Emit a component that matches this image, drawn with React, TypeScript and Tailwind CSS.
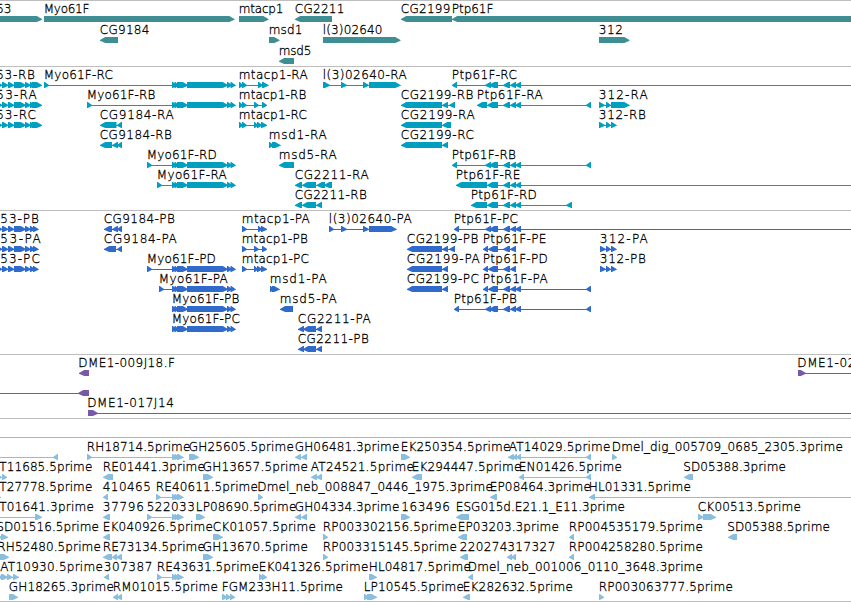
type Span = [number, number];
type Dir = "r" | "l";
interface Feature {
  dir: Dir;
  exons: Span[];
  label?: string;
  // left and right edge of the label
  at?: Span;
  // intron line, where it runs past the outer exons
  line?: Span;
}
type Lane = Feature[];

const f = (dir: Dir, exons: Span[], label?: string, at?: Span, line?: Span): Feature => ({
  dir,
  exons,
  label,
  at,
  line,
});

const EDGE = 860;

const P53: Span[] = [[-4, 2.5], [2, 8.5], [8, 14.5], [14, 26], [25, 31], [30, 35], [32, 42]];
const P53P: Span[] = [[-4, 2.5], [2, 8.5], [8, 14.5], [14, 26], [25, 31], [30, 35], [33, 38.5]];
const MYO: Span[] = [[172, 177], [174.5, 179], [177, 188], [187, 228], [227, 232], [230.5, 235.5]];
const PTP_A: Span[] = [[485, 491], [489, 498]];
const PTP_B: Span[] = [[503, 510], [510, 516], [515, 521]];
const TRIO: Span[] = [[172, 177], [174.5, 179.5], [177, 183.5]];

const genes: Lane[] = [
  [
    f("r", [[-10, 42]], "53", [-4, 11]),
    f("r", [[44, 234.5]], "Myo61F", [43.5, 89]),
    f("r", [[239, 268.5]], "mtacp1", [238.5, 283]),
    f("l", [[295, 332]], "CG2211", [294.5, 344]),
    f("l", [[401, 452]], "CG2199", [400.5, 450]),
    f("l", [[452, EDGE]], "Ptp61F", [451.5, 493]),
  ],
  [
    f("l", [[100, 118]], "CG9184", [99.5, 149]),
    f("r", [[269, 279.5]], "msd1", [268.5, 302]),
    f("r", [[323, 400.5]], "l(3)02640", [322.5, 382]),
    f("r", [[599, 629.5]], "312", [598.5, 622.5]),
  ],
  [f("l", [[279, 294]], "msd5", [278.5, 311])],
];

const transcripts: Lane[] = [
  [
    f("r", P53, "53-RB", [-4, 34.5]),
    f("r", [[44, 49], ...MYO], "Myo61F-RC", [43.5, 112.5]),
    f("r", [[239, 243], [242, 247], [258, 263], [262, 268.5]], "mtacp1-RA", [238.5, 307.5]),
    f("r", [[323, 330], [341, 347], [363, 369], [369, 400.5]], "l(3)02640-RA", [322.5, 406.5]),
    f("l", [[452, 457], ...PTP_A, ...PTP_B], "Ptp61F-RC", [451.5, 516.5], [452, EDGE]),
  ],
  [
    f("r", P53, "53-RA", [-4, 36.5]),
    f("r", [[87, 92], ...MYO], "Myo61F-RB", [86.5, 155]),
    f("r", [[239, 243], [242, 247], [254, 259], [262, 267]], "mtacp1-RB", [238.5, 306]),
    f("l", [[401, 442], [442, 448], [449, 455]], "CG2199-RB", [400.5, 473]),
    f("l", [[477, 487], [487, 498], ...PTP_B, [586, 591]], "Ptp61F-RA", [476.5, 542.5]),
    f("r", [[599, 605], [606, 611], [611, 629.5]], "312-RA", [598.5, 647.5]),
  ],
  [
    f("r", P53, "53-RC", [-4, 35.5]),
    f("l", [[100, 116.5], [117, 122]], "CG9184-RA", [99.5, 173.5]),
    f("r", [[239, 243], [242, 247], [254, 258], [257, 262], [261, 267]], "mtacp1-RC", [238.5, 306.5]),
    f("l", [[401, 442], [442, 451]], "CG2199-RA", [400.5, 474.5]),
    f("r", [[599, 605], [606, 611], [611, 616.5]], "312-RB", [598.5, 645.5]),
  ],
  [
    f("l", [[100, 112], [112, 118], [117, 122]], "CG9184-RB", [99.5, 171.5]),
    f("r", [[269, 273.5], [272, 280.5]], "msd1-RA", [268.5, 326.5]),
    f("l", [[401, 442], [442, 448]], "CG2199-RC", [400.5, 473.5]),
  ],
  [
    f("r", [[147, 152], ...MYO], "Myo61F-RD", [146.5, 216.5]),
    f("l", [[279, 294]], "msd5-RA", [278.5, 336.5]),
    f("l", [[452, 457], ...PTP_A, ...PTP_B, [586, 591]], "Ptp61F-RB", [451.5, 515.5]),
  ],
  [
    f("r", [[157, 162], ...MYO], "Myo61F-RA", [156.5, 226.5]),
    f("l", [[295, 302], [302, 316], [316.5, 325], [324, 332]], "CG2211-RA", [294.5, 368.5]),
    f("l", [[456, 487], [487, 498], ...PTP_B], "Ptp61F-RE", [455.5, 520], [456, EDGE]),
  ],
  [
    f("l", [[295, 302], [302, 316], [316, 322]], "CG2211-RB", [294.5, 366.5]),
    f("l", [[471, 487], [487, 498], ...PTP_B, [566, 572]], "Ptp61F-RD", [470.5, 536.5]),
  ],
];

const proteins: Lane[] = [
  [
    f("r", P53P, "53-PB", [0, 38.5]),
    f("l", [[104, 112], [112, 118], [117, 122]], "CG9184-PB", [103.5, 174.5]),
    f("r", [[242, 247], [258, 262.5], [261, 267]], "mtacp1-PA", [241.5, 309.5]),
    f("r", [[329, 334], [341, 347], [363, 369], [369, 396.5]], "l(3)02640-PA", [328.5, 411.5]),
    f("l", [[454, 459], ...PTP_A, ...PTP_B], "Ptp61F-PC", [453.5, 517.5], [454, EDGE]),
  ],
  [
    f("r", P53P, "53-PA", [0, 40.5]),
    f("l", [[104, 116], [117, 122]], "CG9184-PA", [103.5, 176.5]),
    f("r", [[242, 247], [254, 259], [262, 267]], "mtacp1-PB", [241.5, 307.5]),
    f("l", [[407, 442], [442, 448], [449, 455]], "CG2199-PB", [406.5, 478]),
    f("l", [[483, 488], [488, 498], [503, 510], [510, 516]], "Ptp61F-PE", [482.5, 546]),
    f("r", [[600, 606], [606, 611], [611, 616.5]], "312-PA", [599.5, 647.5]),
  ],
  [
    f("r", P53P, "53-PC", [0, 39.5]),
    f("r", [[147, 152], ...MYO], "Myo61F-PD", [146.5, 215.5]),
    f("r", [[242, 247], [254, 258], [257, 262], [261, 267]], "mtacp1-PC", [241.5, 308.5]),
    f("l", [[407, 442], [442, 448]], "CG2199-PA", [406.5, 479.5]),
    f("l", [[483, 488], [488, 498], [503, 510], [510, 516]], "Ptp61F-PD", [482.5, 547.5]),
    f("r", [[600, 606], [606, 611], [611, 616.5]], "312-PB", [599.5, 645.5]),
  ],
  [
    f("r", [[159, 164], ...MYO], "Myo61F-PA", [158.5, 227.5]),
    f("r", [[270, 274], [272, 279.5]], "msd1-PA", [269.5, 326.5]),
    f("l", [[407, 442], [442, 448]], "CG2199-PC", [406.5, 478.5]),
    f("l", [[483, 488], [488, 498], ...PTP_B, [586, 591]], "Ptp61F-PA", [482.5, 547.5]),
  ],
  [
    f("r", MYO, "Myo61F-PB", [171.5, 239]),
    f("l", [[280, 293]], "msd5-PA", [279.5, 336.5]),
    f("l", [[454, 459], ...PTP_A, ...PTP_B, [586, 591]], "Ptp61F-PB", [453.5, 516.5]),
  ],
  [
    f("r", MYO, "Myo61F-PC", [171.5, 239.5]),
    f("l", [[298, 304], [303, 316], [316, 322]], "CG2211-PA", [297.5, 370.5]),
  ],
  [f("l", [[298, 304], [303, 316], [316, 322]], "CG2211-PB", [297.5, 368.5])],
];

const insertions: Lane[] = [
  [
    f("l", [[79, 89]], "DME1-009J18.F", [78, 174.5]),
    f("r", [[798, 806]], "DME1-02", [797, 855], [798, EDGE]),
  ],
  [f("l", [[78, 89]], undefined, undefined, [-5, 89])],
  [f("r", [[88, 98]], "DME1-017J14", [87, 173.5], [88, EDGE])],
];

const ests: Lane[] = [
  [f("r", [], undefined, undefined, [-5, EDGE])],
  [
    f("l", [[53, 58]], undefined, undefined, [-5, 58]),
    f("r", [[87, 92], ...TRIO], "RH18714.5prime", [86.5, 190]),
    f("r", [[189, 199]], "GH25605.5prime", [188.5, 293.5]),
    f("l", [[295, 301], [301, 307]], "GH06481.3prime", [294.5, 399]),
    f("r", [[401, 410]], "EK250354.5prime", [400.5, 510]),
    f("l", [[508, 514], [513, 517], [516, 521], [586, 591]], "AT14029.5prime", [508.5, 610]),
    f("r", [[612, 617]], "Dmel_dig_005709_0685_2305.3prime", [611.5, 842.5]),
  ],
  [
    f("r", [[-5, 2], [2, 7]], "T11685.5prime", [-1, 92]),
    f("l", [[103, 113]], "RE01441.3prime", [102.5, 204.5]),
    f("r", [[203, 213]], "GH13657.5prime", [202.5, 307.5]),
    f("l", [[311, 317], [316, 322]], "AT24521.5prime", [310.5, 413.5]),
    f("l", [[412, 422]], "EK294447.5prime", [411.5, 521]),
    f("l", [[519, 524], [586, 591]], "EN01426.5prime", [518.5, 621.5]),
    f("l", [[684, 693]], "SD05388.3prime", [683, 785.5]),
  ],
  [
    f("r", [[-5, 1]], "T27778.5prime", [-1, 92]),
    f("l", [[103, 108]], "410465", [102.5, 150.5]),
    f("r", [[156, 161], ...TRIO], "RE40611.5prime", [155.5, 257.5]),
    f("r", [[258, 263]], "Dmel_neb_008847_0446_1975.3prime", [257, 492.5]),
    f("l", [[490, 497]], "EP08464.3prime", [489.5, 590.5]),
    f("l", [[589, 595]], "HL01331.5prime", [588.5, 690.5], [589, EDGE]),
  ],
  [
    f("r", [[35, 42]], "T01641.3prime", [-1, 93.5], [-5, 42]),
    f("l", [[103, 110]], "37796", [102.5, 143.5]),
    f("r", [[147, 152], ...TRIO], "522033", [146.5, 194.5]),
    f("r", [[196, 205]], "LP08690.5prime", [195.5, 296]),
    f("l", [[295, 301], [301, 307]], "GH04334.3prime", [294.5, 399]),
    f("r", [[401, 410]], "163496", [401, 449.5]),
    f("l", [[456, 469]], "ESG015d.E21.1_E11.3prime", [455.5, 624.5]),
    f("r", [[698, 704], [703, 716]], "CK00513.5prime", [697.5, 800.5]),
  ],
  [
    f("r", [[-5, 2], [1, 8]], "SD01516.5prime", [-4, 98.5]),
    f("l", [[103, 110]], "EK040926.5prime", [102.5, 212.5]),
    f("r", [[213, 223]], "CK01057.5prime", [212.5, 315.5]),
    f("r", [[323, 328]], "RP003302156.5prime", [322.5, 456.5]),
    f("l", [[458, 467]], "EP03203.3prime", [457.5, 558.5]),
    f("l", [[569, 574]], "RP004535179.5prime", [568.5, 702.5]),
    f("l", [[728, 737]], "SD05388.5prime", [727, 829.5]),
  ],
  [
    f("r", [[-2, 9]], "RH52480.5prime", [-3, 100.5]),
    f("l", [[103, 112], [112, 117], [116, 122]], "RE73134.5prime", [102.5, 204.5]),
    f("r", [[203, 213]], "GH13670.5prime", [202.5, 307.5]),
    f("r", [[323, 328]], "RP003315145.5prime", [322.5, 456.5]),
    f("l", [[460, 468]], "220274", [459.5, 507]),
    f("l", [[507, 512], [511, 516]], "317327", [507, 555]),
    f("l", [[569, 574]], "RP004258280.5prime", [568.5, 702.5]),
  ],
  [
    f("r", [[-4, 3], [1, 8], [7, 13], [13, 19]], "AT10930.5prime", [0, 102.5]),
    f("l", [[104, 109]], "307387", [103.5, 152]),
    f("r", [[157, 162], ...TRIO], "RE43631.5prime", [156.5, 258.5]),
    f("r", [[259, 264], [262, 267]], "EK041326.5prime", [258.5, 368]),
    f("r", [[369, 377]], "HL04817.5prime", [368.5, 470.5]),
    f("l", [[468, 473]], "Dmel_neb_001006_0110_3648.3prime", [467.5, 702.5]),
  ],
  [
    f("r", [[9, 18]], "GH18265.3prime", [8.5, 113.5]),
    f("l", [[113, 118], [117, 122]], "RM01015.5prime", [112.5, 217.5]),
    f("r", [[222, 228], [226, 231], [230, 235]], "FGM233H11.5prime", [221.5, 342.5]),
    f("r", [[364, 369], [367, 377]], "LP10545.5prime", [363.5, 463.5]),
    f("l", [[463, 470]], "EK282632.5prime", [462.5, 572.5]),
    f("r", [[599, 604]], "RP003063777.5prime", [598.5, 732.5]),
  ],
];

function arrow(dir: Dir, [a, b]: Span) {
  const head = Math.min(b - a, 6);
  return dir === "r"
    ? `${a},15 ${b - head + 0.8},15 ${b},18 ${b},18.8 ${b - head + 0.8},21 ${a},21`
    : `${b},15 ${a + head - 0.8},15 ${a},18 ${a},18.8 ${a + head - 0.8},21 ${b},21`;
}

function FeatureGlyph({ feature }: { feature: Feature }) {
  const { dir, exons, label, at, line } = feature;
  const [x1, x2] = line ?? [exons[0][0], exons[exons.length - 1][1]];
  const drawLine = line !== undefined || exons.length > 1;
  return (
    <g>
      {drawLine && <rect x={x1} y={18} width={x2 - x1} height={1} />}
      {exons.map((exon, i) => (
        <polygon key={i} points={arrow(dir, exon)} />
      ))}
      {label && at && (
        <text
          x={at[0] + 0.3}
          y={12}
          textLength={at[1] - at[0]}
          className="fill-black stroke-black stroke-[0.3px] text-[12px] font-extralight"
        >
          {label}
        </text>
      )}
    </g>
  );
}

function Track({ lanes, className, laneClass }: { lanes: Lane[]; className: string; laneClass: string }) {
  return (
    <section className={`flex flex-col overflow-hidden border-t border-[#bebebe] ${className}`}>
      {lanes.map((lane, i) => (
        <svg key={i} className={`block w-[851px] shrink-0 overflow-visible fill-current ${laneClass}`}>
          {lane.map((feature, j) => (
            <FeatureGlyph key={j} feature={feature} />
          ))}
        </svg>
      ))}
    </section>
  );
}

export default function App() {
  return (
    <main className="flex h-[602px] w-[851px] flex-col overflow-hidden border-b border-[#bebebe] bg-white font-['DejaVu_Sans',sans-serif]">
      <Track lanes={genes} className="h-[66px] text-[#3e8e93]" laneClass="h-[21px]" />
      <Track lanes={transcripts} className="h-[144px] text-[#009fc0]" laneClass="h-5" />
      <Track lanes={proteins} className="h-[144px] text-[#306bcc]" laneClass="h-5" />
      <Track lanes={insertions} className="h-16 text-[#7859a9]" laneClass="h-5" />
      <Track lanes={ests} className="h-[183px] text-[#89bede]" laneClass="h-5" />
    </main>
  );
}
